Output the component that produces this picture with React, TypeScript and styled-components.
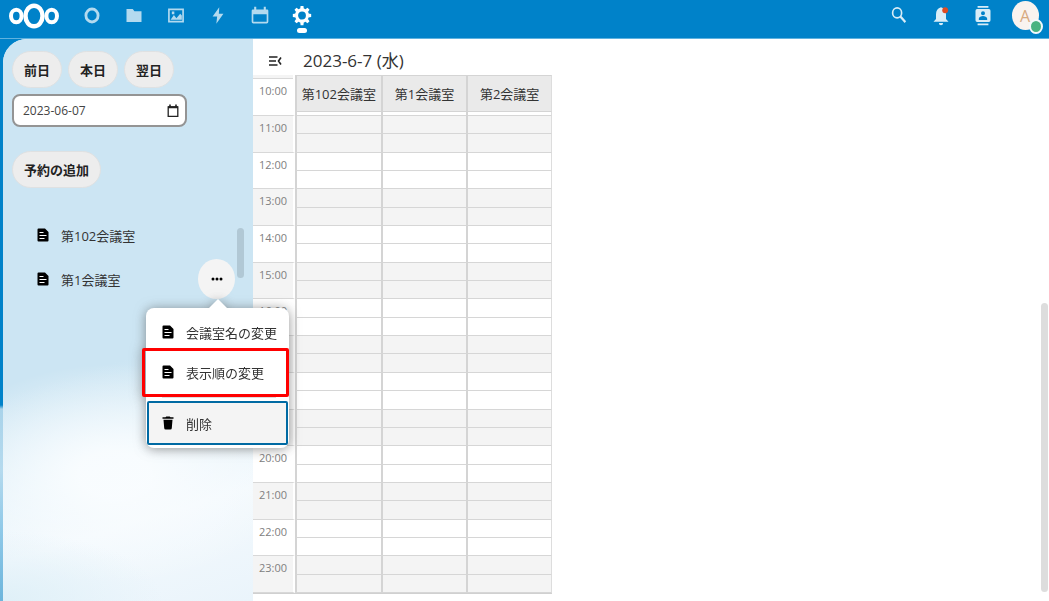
import React, { useState } from "react";
import styled, { createGlobalStyle, css } from "styled-components";

const GlobalStyle = createGlobalStyle`
  *, *::before, *::after { box-sizing: border-box; }
  html, body { margin: 0; height: 100%; overflow: hidden; }
  #root { height: 100%; }
  body, button, input {
    font-family: "Open Sans", "Noto Sans CJK JP", sans-serif;
    font-size: 13px;
    color: #222;
  }
`;

const Page = styled.div`
  display: flex;
  flex-direction: column;
  height: 100vh;
  background:
    linear-gradient(to bottom, transparent 405px, #a9d3ea 409px, #b5daee 470px, #8fc9e8 530px, #6db5dc 100%) left / 3px 100% no-repeat,
    #0082c9;
`;

const Header = styled.header`
  display: flex;
  align-items: flex-start;
  justify-content: space-between;
  height: 39px;
  padding: 0 3px 0 9px;
  border-bottom: 1px solid #5fb2df;
`;

const HeaderGroup = styled.div`
  display: flex;
`;

const Nav = styled.nav`
  display: flex;
  margin-left: 12px;
`;

const LogoLink = styled.a`
  display: flex;
  padding-top: 3px;
`;

const NavLink = styled.a<{ $active?: boolean }>`
  display: flex;
  flex-direction: column;
  align-items: center;
  width: 42px;
  height: 38px;
  padding-top: 5px;
  color: ${(p) => (p.$active ? "#fff" : "#b3daef")};
  ${(p) =>
    p.$active &&
    css`
      &::after {
        content: "";
        width: 10px;
        height: 5px;
        margin-top: 2px;
        border-radius: 3px;
        background: #fff;
      }
    `}
`;

const HeaderButton = styled.button`
  display: flex;
  justify-content: center;
  width: 42px;
  height: 38px;
  padding: 5px 0 0;
  border: 0;
  background: none;
  color: #d9edf7;
`;

const AvatarButton = styled(HeaderButton)`
  padding-top: 1px;
`;

const Avatar = styled.span`
  position: relative;
  display: flex;
  align-items: center;
  justify-content: center;
  width: 27px;
  height: 29px;
  border-radius: 50%;
  background: #f9f3ef;
  color: #d7a97f;
  font-size: 16px;
`;

const Status = styled.span`
  position: absolute;
  right: -4px;
  bottom: -4px;
  width: 14px;
  height: 15px;
  border: 2px solid #f2f9fc;
  border-radius: 50%;
  background: #49b382;
`;

const Content = styled.div`
  display: flex;
  flex: 1;
  min-height: 0;
  margin-left: 3px;
  border-top-left-radius: 24px;
  overflow: hidden;
  background: #fff;
`;

const Sidebar = styled.aside`
  position: relative;
  display: flex;
  flex-direction: column;
  align-items: flex-start;
  flex: 0 0 250px;
  padding: 12px 0 0 9px;
  background:
    radial-gradient(ellipse 160px 70px at 0 100%, #dff0f8, transparent),
    radial-gradient(ellipse 180px 110px at 110px 435px, rgba(250, 253, 255, 0.9) 20%, transparent),
    linear-gradient(163deg, #cce5f3 56%, #e6f3fa 72%, #f3f9fd 82%, #eaf4fb 100%);
`;

const DayButtons = styled.div`
  display: flex;
  gap: 6px;
`;

const Pill = styled.button`
  height: 37px;
  padding: 0 11px;
  border: 1px solid #dfe1e2;
  border-radius: 19px;
  background: #ededed;
  font-weight: 700;
  line-height: 18px;
  white-space: nowrap;
`;

const DateField = styled.label`
  display: flex;
  align-items: center;
  width: 175px;
  height: 33px;
  margin: 6px 0 24px;
  padding: 0 6px 0 9px;
  border: 2px solid #949494;
  border-radius: 8px;
  background: #fff;
`;

const DateInput = styled.input`
  flex: 1;
  min-width: 0;
  padding: 0;
  border: 0;
  outline: 0;
  background: none;
  color: #444;
  font-size: 12px;
`;

const RoomList = styled.ul`
  align-self: stretch;
  margin: 25px 0 0;
  padding: 0;
  list-style: none;
`;

const RoomItem = styled.li`
  position: relative;
  display: flex;
  align-items: center;
  height: 44px;
  padding: 0 18px 0 25px;
`;

const RoomLink = styled.a`
  display: flex;
  flex: 1;
  align-items: center;
  gap: 12px;
  color: #333;
  text-decoration: none;
`;

const MoreButton = styled.button`
  display: flex;
  align-items: center;
  justify-content: center;
  width: 37px;
  height: 40px;
  padding: 0;
  border: 0;
  border-radius: 50%;
  background: #f4f4f4;
`;

const SidebarThumb = styled.div`
  position: absolute;
  top: 189px;
  right: 9px;
  width: 7px;
  height: 50px;
  border-radius: 4px;
  background: #b1c8d5;
`;

const Menu = styled.ul`
  position: absolute;
  z-index: 2;
  top: 51px;
  left: 134px;
  width: 143px;
  margin: 0;
  padding: 4px 1px 3px;
  border-radius: 8px;
  background: #fff;
  list-style: none;
  filter: drop-shadow(0 1px 6px rgba(77, 77, 77, 0.6));

  &::before {
    content: "";
    position: absolute;
    top: -9px;
    left: 63px;
    border: solid transparent;
    border-width: 0 9px 9px;
    border-bottom-color: #fff;
  }
`;

const MenuItem = styled.li<{ $marked?: boolean; $separated?: boolean }>`
  position: relative;
  ${(p) =>
    p.$marked &&
    css`
      &::after {
        content: "";
        position: absolute;
        z-index: 1;
        inset: -4px -1px -5px -5px;
        border: 3px solid #f00;
        border-radius: 2px;
        pointer-events: none;
      }
    `}
  ${(p) =>
    p.$separated &&
    css`
      margin-top: 5px;
      padding-top: 4px;
      &::before {
        content: "";
        position: absolute;
        top: 0;
        left: 15px;
        right: 12px;
        border-top: 1px solid #ddd;
      }
    `}
`;

const MenuButton = styled.button<{ $focused?: boolean }>`
  display: flex;
  align-items: center;
  gap: 12px;
  width: 100%;
  height: ${(p) => (p.$focused ? 44 : 40)}px;
  padding: 0 0 0 ${(p) => (p.$focused ? 13 : 15)}px;
  border: ${(p) => (p.$focused ? "2px solid #006aa3" : "0")};
  border-radius: 2px;
  background: ${(p) => (p.$focused ? "#f4f4f4" : "none")};
  color: #333;
  white-space: nowrap;
`;

const Main = styled.main`
  position: relative;
  flex: 1;
  min-width: 0;
  overflow: hidden;
`;

const TitleBar = styled.div`
  display: flex;
  align-items: center;
  height: 36px;
  padding: 8px 0 0 14px;
`;

const ToggleButton = styled.button`
  display: flex;
  padding: 0;
  margin-right: 19px;
  border: 0;
  background: none;
`;

const Title = styled.h1`
  margin: 0;
  color: #333;
  font-size: 17px;
  font-weight: 400;
  line-height: 24px;
`;

const MainThumb = styled.div`
  position: absolute;
  right: 1px;
  bottom: 9px;
  width: 7px;
  height: 289px;
  border-radius: 4px;
  background: #ddd;
`;

const Schedule = styled.table`
  width: 299px;
  height: 519px;
  table-layout: fixed;
  border-collapse: separate;
  border-spacing: 0;
  border-bottom: 1px solid #d0d0d0;
`;

const TimeCol = styled.col`
  width: 42px;
`;

const HourHead = styled.th<{ $shaded: boolean }>`
  padding: 4px 6px 0 0;
  border-right: 2px solid #fff;
  border-bottom: 1px solid #d8d8d8;
  background: ${(p) => (p.$shaded ? "#f4f4f4" : "#fff")};
  color: #808080;
  font-size: 11px;
  font-weight: 400;
  line-height: 16px;
  text-align: right;
  vertical-align: top;
`;

const FirstHourHead = styled(HourHead)`
  padding: 0;
  background: #f4f4f4;
`;

const FirstHour = styled.div`
  height: 37px;
  margin-top: 3px;
  padding: 4px 6px 0 0;
  border-top: 1px solid #d8d8d8;
  background: #fff;
`;

const RoomHead = styled.th`
  height: 37px;
  padding: 0;
  border: 1px solid #d4d4d4;
  border-left-width: 2px;
  border-right-width: 0;
  background: #eaeaea;
  color: #333;
  font-weight: 400;
  white-space: nowrap;
  &:last-child { border-right: 1px solid #ddd; }
`;

const Slot = styled.td<{ $shaded: boolean; $peek?: boolean }>`
  height: ${(p) => (p.$peek ? 4 : 18)}px;
  padding: 0;
  border-left: 2px solid #d4d4d4;
  border-bottom: 1px solid #d6d6d6;
  background: ${(p) => (p.$shaded ? "#f4f4f4" : "#fff")};
  &:last-child { border-right: 1px solid #ddd; }
`;

function Glyph({ d, w = 20, h = 21, fill = "currentColor", children }: {
  d?: string; w?: number; h?: number; fill?: string; children?: React.ReactNode;
}) {
  return (
    <svg width={w} height={h} viewBox="0 0 24 24" preserveAspectRatio="none" fill={fill} aria-hidden="true">
      {d && <path d={d} />}
      {children}
    </svg>
  );
}

const FileIcon = () => (
  <svg width="12" height="14" viewBox="0 0 12 14" aria-hidden="true">
    <path d="M1.500 .5h6.500l3.500 3.500v8.500a1 1 0 0 1-1 1h-9a1 1 0 0 1-1-1v-11a1 1 0 0 1 1-1z" fill="#000" />
    <path d="M2.500 4.500h4M2.500 7.500h7M2.500 10.500h5" stroke="#fff" strokeWidth="1" />
  </svg>
);

const TrashIcon = () => (
  <svg width="12" height="14" viewBox="0 0 12 14" fill="#000" aria-hidden="true">
    <path d="M.5 1.200h3L4.300.4h3.400l.8.800h3v1.600H.5zM1.500 3.800h9l-.7 8.200a1.500 1.500 0 0 1-1.500 1.500H3.700A1.500 1.500 0 0 1 2.200 12z" />
  </svg>
);

const apps: { name: string; active?: boolean; icon: React.ReactNode }[] = [
  { name: "ダッシュボード", icon: <Glyph><ellipse cx="12" cy="12" rx="7.300" ry="7.300" fill="none" stroke="currentColor" strokeWidth="3.400" /></Glyph> },
  { name: "ファイル", icon: <Glyph d="M3 4.500h7.500l2 2.500H21v12.500H3z" /> },
  { name: "写真", icon: <Glyph><path fillRule="evenodd" d="M2.500 4h19v16h-19zM4.500 6v12h15V6zM5.500 16.800l4-5.300 3 3.500 4.500-5 2 2v4.800zM7 7.500h3v3H7z" /></Glyph> },
  { name: "アクティビティ", icon: <Glyph d="M13.500 2.500 5.500 13h5.500l-1 8.500 8.500-11.500h-5.500z" /> },
  { name: "カレンダー", icon: <Glyph><path fillRule="evenodd" d="M5 2h2.500v3h9V2H19v3h1.500A1.500 1.500 0 0 1 22 6.500V19a2 2 0 0 1-2 2H4a2 2 0 0 1-2-2V6.500A1.500 1.500 0 0 1 3.500 5H5zM4 10.500v8.500h16v-8.500z" /></Glyph> },
  {
    name: "会議室予約", active: true, icon: (
      <Glyph>
        <circle cx="12" cy="12" r="6.500" fill="none" stroke="currentColor" strokeWidth="3.600" />
        {[0, 45, 90, 135, 180, 225, 270, 315].map((a) => (
          <path key={a} d="M9.800 4.500l.5-3.500h3.400l.5 3.500z" transform={`rotate(${a} 12 12)`} />
        ))}
      </Glyph>
    ),
  },
];

const rooms = ["第102会議室", "第1会議室", "第2会議室"];
const hours = Array.from({ length: 13 }, (_, i) => i + 11);

export default function App() {
  const [date, setDate] = useState("2023-06-07");

  return (
    <>
      <GlobalStyle />
      <Page>
        <Header>
          <HeaderGroup>
            <LogoLink href="#" aria-label="Nextcloud">
              <svg width="50" height="26" viewBox="0 0 50 26" fill="none" stroke="#fff" aria-hidden="true">
                <ellipse cx="25" cy="13" rx="8.500" ry="10.300" strokeWidth="4.400" />
                <ellipse cx="7.300" cy="13" rx="5.300" ry="6.200" strokeWidth="4" />
                <ellipse cx="42.700" cy="13" rx="5.300" ry="6.200" strokeWidth="4" />
              </svg>
            </LogoLink>
            <Nav>
              {apps.map((a) => (
                <NavLink key={a.name} href="#" aria-label={a.name} $active={a.active}>
                  {a.icon}
                </NavLink>
              ))}
            </Nav>
          </HeaderGroup>
          <HeaderGroup>
            <HeaderButton aria-label="検索">
              <Glyph w={18} h={20}>
                <circle cx="9.500" cy="9.500" r="6" fill="none" stroke="currentColor" strokeWidth="2.200" />
                <path d="M14 14l6.500 6.500" stroke="currentColor" strokeWidth="2.800" />
              </Glyph>
            </HeaderButton>
            <HeaderButton aria-label="通知">
              <Glyph d="M12 2.500c-4 1-6 4-6 8V16l-3 3h18l-3-3v-5.500c0-4-2-7-6-8zM9.500 20.500a2.500 2.500 0 0 0 5 0z">
                <ellipse cx="17" cy="6" rx="3.500" ry="3.300" fill="#dd4b22" />
              </Glyph>
            </HeaderButton>
            <HeaderButton aria-label="連絡先">
              <Glyph>
                <path fillRule="evenodd" d="M5.500 1h13v2h-13zM5.500 21h13v2h-13zM5 4.500h14a2 2 0 0 1 2 2v11a2 2 0 0 1-2 2H5a2 2 0 0 1-2-2v-11a2 2 0 0 1 2-2zM12 7a2.400 2.400 0 1 0 0 4.800A2.400 2.400 0 0 0 12 7zM7 17h10v-1.500c0-2-3-3-5-3s-5 1-5 3z" />
              </Glyph>
            </HeaderButton>
            <AvatarButton aria-label="アカウント">
              <Avatar>A<Status /></Avatar>
            </AvatarButton>
          </HeaderGroup>
        </Header>

        <Content>
          <Sidebar>
            <DayButtons>
              <Pill>前日</Pill>
              <Pill>本日</Pill>
              <Pill>翌日</Pill>
            </DayButtons>
            <DateField>
              <DateInput aria-label="日付" value={date} onChange={(e) => setDate(e.target.value)} />
              <svg width="12" height="14" viewBox="0 0 12 14" aria-hidden="true">
                <path d="M1.200 3h9.600v9.300H1.200z" fill="none" stroke="#222" strokeWidth="1.300" />
                <path d="M1 2.300h10v2H1zM2.200.5h1.600v2H2.200zM8.200.5h1.600v2H8.200z" fill="#222" />
              </svg>
            </DateField>
            <Pill>予約の追加</Pill>
            <RoomList>
              <RoomItem>
                <RoomLink href="#"><FileIcon />第102会議室</RoomLink>
              </RoomItem>
              <RoomItem>
                <RoomLink href="#"><FileIcon />第1会議室</RoomLink>
                <MoreButton aria-label="アクション">
                  <svg width="12" height="4" viewBox="0 0 12 4" aria-hidden="true">
                    <circle cx="2" cy="2" r="1.500" /><circle cx="6" cy="2" r="1.500" /><circle cx="10" cy="2" r="1.500" />
                  </svg>
                </MoreButton>
                <Menu>
                  <MenuItem><MenuButton><FileIcon />会議室名の変更</MenuButton></MenuItem>
                  <MenuItem $marked><MenuButton><FileIcon />表示順の変更</MenuButton></MenuItem>
                  <MenuItem $separated>
                    <MenuButton $focused><TrashIcon />削除</MenuButton>
                  </MenuItem>
                </Menu>
              </RoomItem>
            </RoomList>
            <SidebarThumb />
          </Sidebar>

          <Main>
            <TitleBar>
              <ToggleButton aria-label="ナビゲーションを閉じる">
                <svg width="17" height="14" viewBox="0 0 17 14" fill="none" stroke="#222" strokeWidth="1.600" aria-hidden="true">
                  <path d="M2 3h8.500M2 7h7M2 11h8.500M14 3.500 11.500 7l2.500 3.500" />
                </svg>
              </ToggleButton>
              <Title>2023-6-7 (水)</Title>
            </TitleBar>
            <Schedule>
              <colgroup><TimeCol /><col /><col /><col /></colgroup>
              <thead>
                <tr>
                  <FirstHourHead rowSpan={2} $shaded={false}><FirstHour>10:00</FirstHour></FirstHourHead>
                  {rooms.map((r) => <RoomHead key={r}>{r}</RoomHead>)}
                </tr>
                <tr>{rooms.map((r) => <Slot key={r} $shaded={false} $peek />)}</tr>
              </thead>
              <tbody>
                {hours.map((h) => {
                  const shaded = h % 2 === 1;
                  return (
                    <React.Fragment key={h}>
                      <tr>
                        <HourHead rowSpan={2} $shaded={shaded}>{h}:00</HourHead>
                        {rooms.map((r) => <Slot key={r} $shaded={shaded} />)}
                      </tr>
                      <tr>{rooms.map((r) => <Slot key={r} $shaded={shaded} />)}</tr>
                    </React.Fragment>
                  );
                })}
              </tbody>
            </Schedule>
            <MainThumb />
          </Main>
        </Content>
      </Page>
    </>
  );
}
